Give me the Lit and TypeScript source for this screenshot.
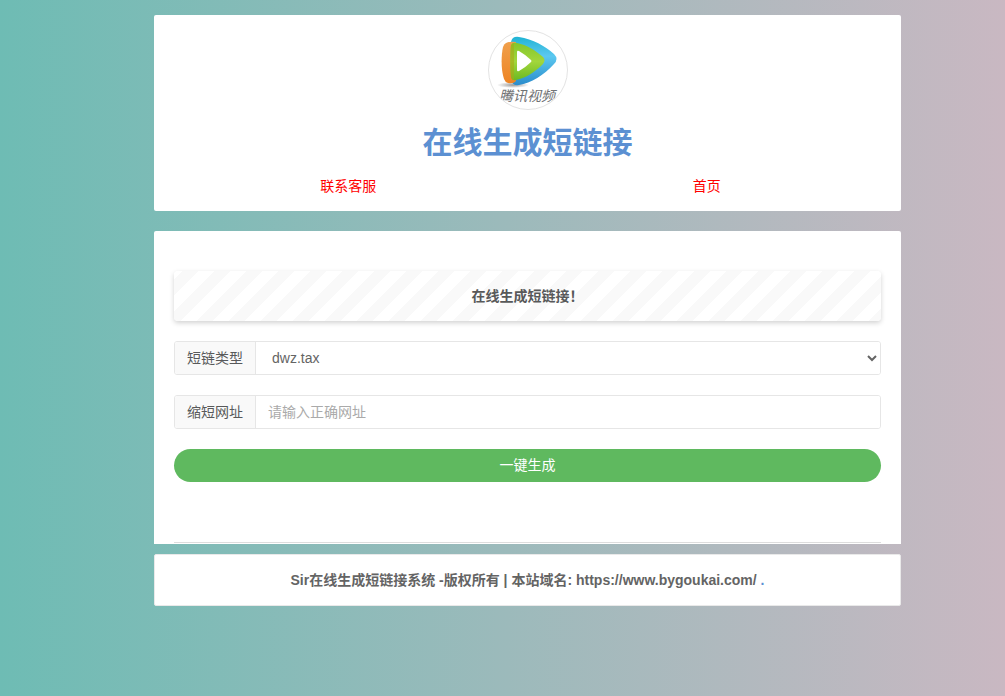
import { LitElement, html, css } from "lit";
import { customElement } from "lit/decorators.js";

@customElement("app-root")
export class AppRoot extends LitElement {
  static styles = css`
    :host {
      display: block;
      box-sizing: border-box;
      min-height: 100vh;
      padding: 15px 104px 20px 154px;
      background: linear-gradient(to right, #6ebcb4, #c9b8c2);
      color: #58595a;
      font: 14px/20px "Liberation Sans", "Noto Sans CJK SC", sans-serif;
    }
    *,
    *::before {
      box-sizing: border-box;
    }
    .card {
      background: #fff;
      border-radius: 2px;
    }
    .header {
      padding: 15px;
      text-align: center;
    }
    .logo {
      display: block;
      width: 80px;
      height: 80px;
      margin: 0 auto 16px;
    }
    .title {
      margin: 0 0 16px;
      color: #5c90d2;
      font-size: 30px;
      line-height: 34px;
      font-weight: 700;
    }
    .links {
      display: grid;
      grid-template-columns: 1fr 1fr;
    }
    .links a {
      color: #f00;
      text-decoration: none;
    }
    .main {
      margin-top: 20px;
      padding: 40px 20px 1px;
      border-radius: 2px 2px 0 0;
    }
    .notice {
      padding: 15px;
      border-radius: 4px;
      background: linear-gradient(
          135deg,
          #fff 12.5%,
          #f9f9f9 12.5% 37.5%,
          #fff 37.5% 62.5%,
          #f9f9f9 62.5% 87.5%,
          #fff 87.5%
        )
        0 0 / 32px 32px;
      box-shadow: 0 2px 5px rgba(0, 0, 0, 0.18);
      font-weight: 700;
      text-align: center;
    }
    .group {
      display: flex;
      height: 34px;
      margin-top: 20px;
      border: 1px solid #e6e6e6;
      border-radius: 3px;
      overflow: hidden;
      background: #fff;
    }
    .label {
      flex: none;
      padding: 6px 12px;
      border-right: 1px solid #e6e6e6;
      background: #f9f9f9;
    }
    .field {
      flex: 1;
      min-width: 0;
      padding: 6px 12px;
      border: 0;
      outline: 0;
      background: #fff;
      color: #646464;
      font: inherit;
    }
    select.field {
      padding-right: 0;
    }
    .field::placeholder {
      color: #aaa;
      opacity: 1;
    }
    .submit {
      display: block;
      width: 100%;
      height: 33px;
      margin-top: 20px;
      padding: 0 12px 2px;
      border: 0;
      border-radius: 17px;
      background: #5fb95f;
      color: #fff;
      font: inherit;
      cursor: pointer;
    }
    .rule {
      height: 1px;
      margin: 60px 0 0;
      border: 0;
      background: #ddd;
    }
    .footer {
      margin-top: 10px;
      padding: 15px;
      border: 1px solid #e9e9e9;
      font-weight: 700;
      text-align: center;
      color: #646464;
    }
    .footer a {
      color: #5c90d2;
      text-decoration: none;
    }
    .logo-text {
      font: italic 14px "Noto Sans CJK SC", sans-serif;
      fill: #707274;
    }
  `;

  render() {
    return html`
      <header class="card header">
        <svg class="logo" viewBox="0 0 80 80" role="img" aria-label="腾讯视频">
          <defs>
            <clipPath id="round"><circle cx="40" cy="40" r="39" /></clipPath>
            <linearGradient id="blue" x1="0" y1="0" x2="0" y2="1">
              <stop offset="0" stop-color="#20b4d4" />
              <stop offset=".4" stop-color="#5cc8f0" />
              <stop offset="1" stop-color="#2a8ccc" />
            </linearGradient>
            <linearGradient id="green" x1="0" y1="0" x2="0" y2="1">
              <stop offset="0" stop-color="#84c62a" />
              <stop offset=".5" stop-color="#a2d63c" />
              <stop offset="1" stop-color="#6cba22" />
            </linearGradient>
            <linearGradient id="orange" x1="0" y1="0" x2="0" y2="1">
              <stop offset="0" stop-color="#f0a04c" />
              <stop offset="1" stop-color="#ee8424" />
            </linearGradient>
            <radialGradient id="shade">
              <stop offset="0" stop-color="#777" stop-opacity=".75" />
              <stop offset="1" stop-color="#777" stop-opacity="0" />
            </radialGradient>
          </defs>
          <circle cx="40" cy="40" r="39.5" fill="#fff" stroke="#e3e3e3" />
          <g clip-path="url(#round)">
            <ellipse cx="25" cy="55" rx="16" ry="3" fill="url(#shade)" />
            <path
              d="M23 12Q24 6 31 7C45 9 57 16 66 24Q71 29 66 34C56 45 43 53 31 55Q25 56 23 51Z"
              fill="url(#blue)"
            />
            <path
              d="M18 13Q22 11 28 12V51Q26 54 20 53Q17 52 16 49C13 40 13 26 15 17Q16 14 18 13Z"
              fill="url(#orange)"
            />
            <path
              d="M23 15Q24 12 29 13C39 15 47 20 55 27Q58 30 55 34C47 42 38 48 28 50Q24 51 23 47C22 37 22 24 23 15Z"
              fill="url(#green)"
            />
            <path
              d="M23 15L26 13V50Q24 50 23 47C22 37 22 24 23 15Z"
              fill="#a8a818"
              opacity=".6"
            />
            <path
              d="M29 22Q29 20 31 21Q38 25 43 30Q44 31 43 32Q38 37 31 41Q29 42 29 40Z"
              fill="#fff"
            />
            <text class="logo-text" x="11" y="71">腾讯视频</text>
          </g>
        </svg>
        <h1 class="title">在线生成短链接</h1>
        <nav class="links">
          <span><a href="#contact">联系客服</a></span>
          <span><a href="#home">首页</a></span>
        </nav>
      </header>

      <main class="card main">
        <div class="notice">在线生成短链接！</div>
        <form @submit=${(e: Event) => e.preventDefault()}>
          <div class="group">
            <label class="label" for="type">短链类型</label>
            <select class="field" id="type">
              <option>dwz.tax</option>
            </select>
          </div>
          <div class="group">
            <label class="label" for="url">缩短网址</label>
            <input class="field" id="url" type="text" placeholder="请输入正确网址" />
          </div>
          <button class="submit" type="submit">一键生成</button>
        </form>
        <hr class="rule" />
      </main>

      <footer class="card footer">
        Sir在线生成短链接系统 -版权所有 | 本站域名: https://www.bygoukai.com/
        <a href="#home">.</a>
      </footer>
    `;
  }
}
